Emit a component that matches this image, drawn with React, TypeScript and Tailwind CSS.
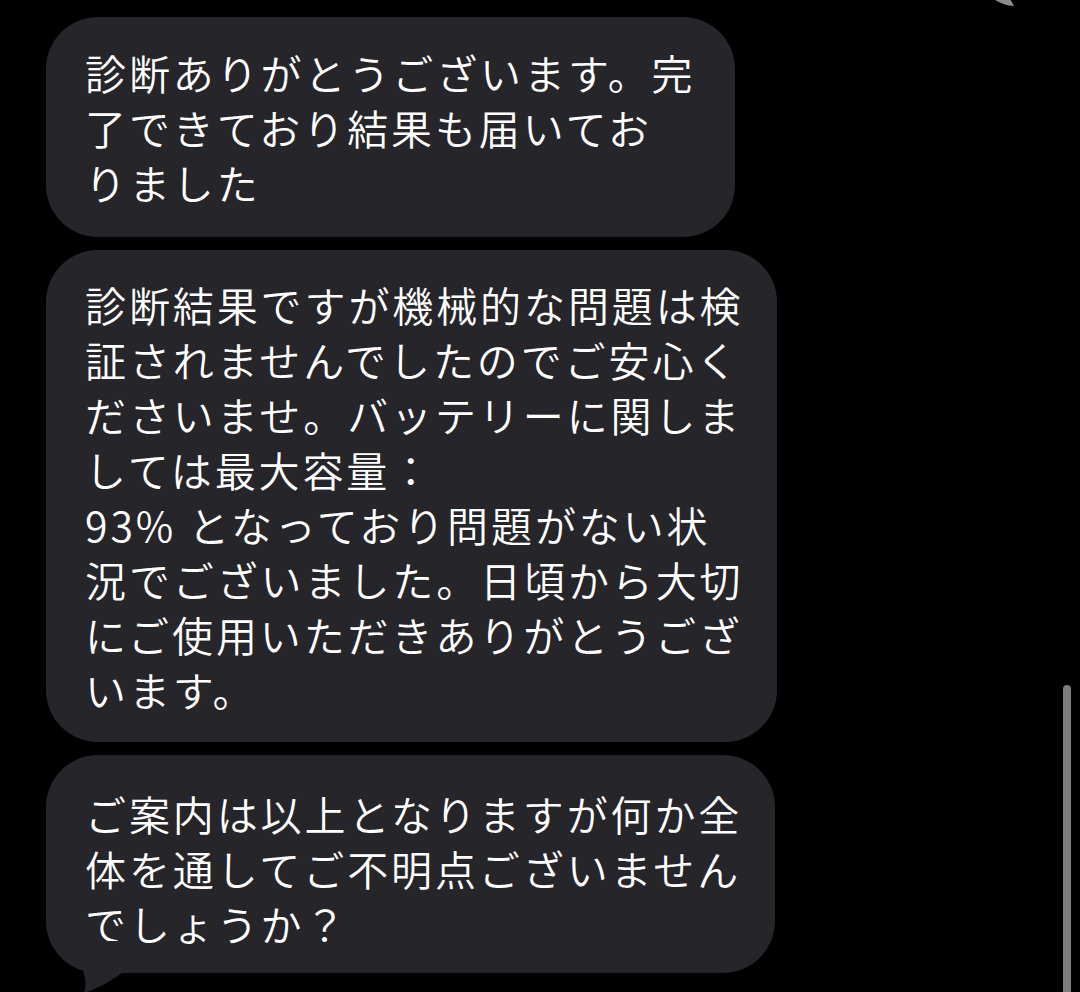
import React from "react";

const font = { fontFamily: '"Noto Sans CJK JP", "Noto Sans", sans-serif' };

function Bubble({ lines, w, pt, pb, children }: { lines: string[]; w: number; pt: number; pb: number; children?: React.ReactNode }) {
  return (
    <div
      className="relative rounded-[52px] bg-[#262529] pl-[39px] text-white text-[41px] font-[350] leading-[55px] tracking-[2.9px] whitespace-nowrap"
      style={{ width: w, paddingTop: pt, paddingBottom: pb, ...font }}
    >
      {lines.map((l, i) => (
        <div key={i}>{l}</div>
      ))}
      {children}
    </div>
  );
}

export default function App() {
  return (
    <div className="relative w-[1080px] h-[992px] bg-black overflow-hidden">
      <div className="flex flex-col gap-[13px] pt-[17px] pl-[46px]">
        <Bubble w={689} pt={28} pb={27} lines={["診断ありがとうございます。完", "了できており結果も届いてお", "りました"]} />
        <Bubble
          w={731}
          pt={27}
          pb={25}
          lines={[
            "診断結果ですが機械的な問題は検",
            "証されませんでしたのでご安心く",
            "ださいませ。バッテリーに関しま",
            "しては最大容量：",
            "93% となっており問題がない状",
            "況でございました。日頃から大切",
            "にご使用いただきありがとうござ",
            "います。",
          ]}
        />
        <Bubble w={729} pt={31} pb={22} lines={["ご案内は以上となりますが何か全", "体を通してご不明点ございません", "でしょうか？"]}>
          <svg className="absolute left-[16px] bottom-[-20px]" width="80" height="52" viewBox="0 0 80 52">
            <path d="M10 0 C 14 18, 28 32, 22 52 C 40 46, 56 36, 72 22 L 72 0 Z" fill="#262529" />
          </svg>
        </Bubble>
      </div>
      <div className="absolute left-[1063px] top-[685px] w-[8px] h-[320px] rounded-full bg-[#7c7c7e]" />
      <svg className="absolute left-[990px] top-[-4px]" width="28" height="12" viewBox="0 0 28 12">
        <path d="M2 2 C 8 6, 16 10, 24 10 C 22 6, 20 3, 18 0 Z" fill="#8a8a90" />
      </svg>
    </div>
  );
}
